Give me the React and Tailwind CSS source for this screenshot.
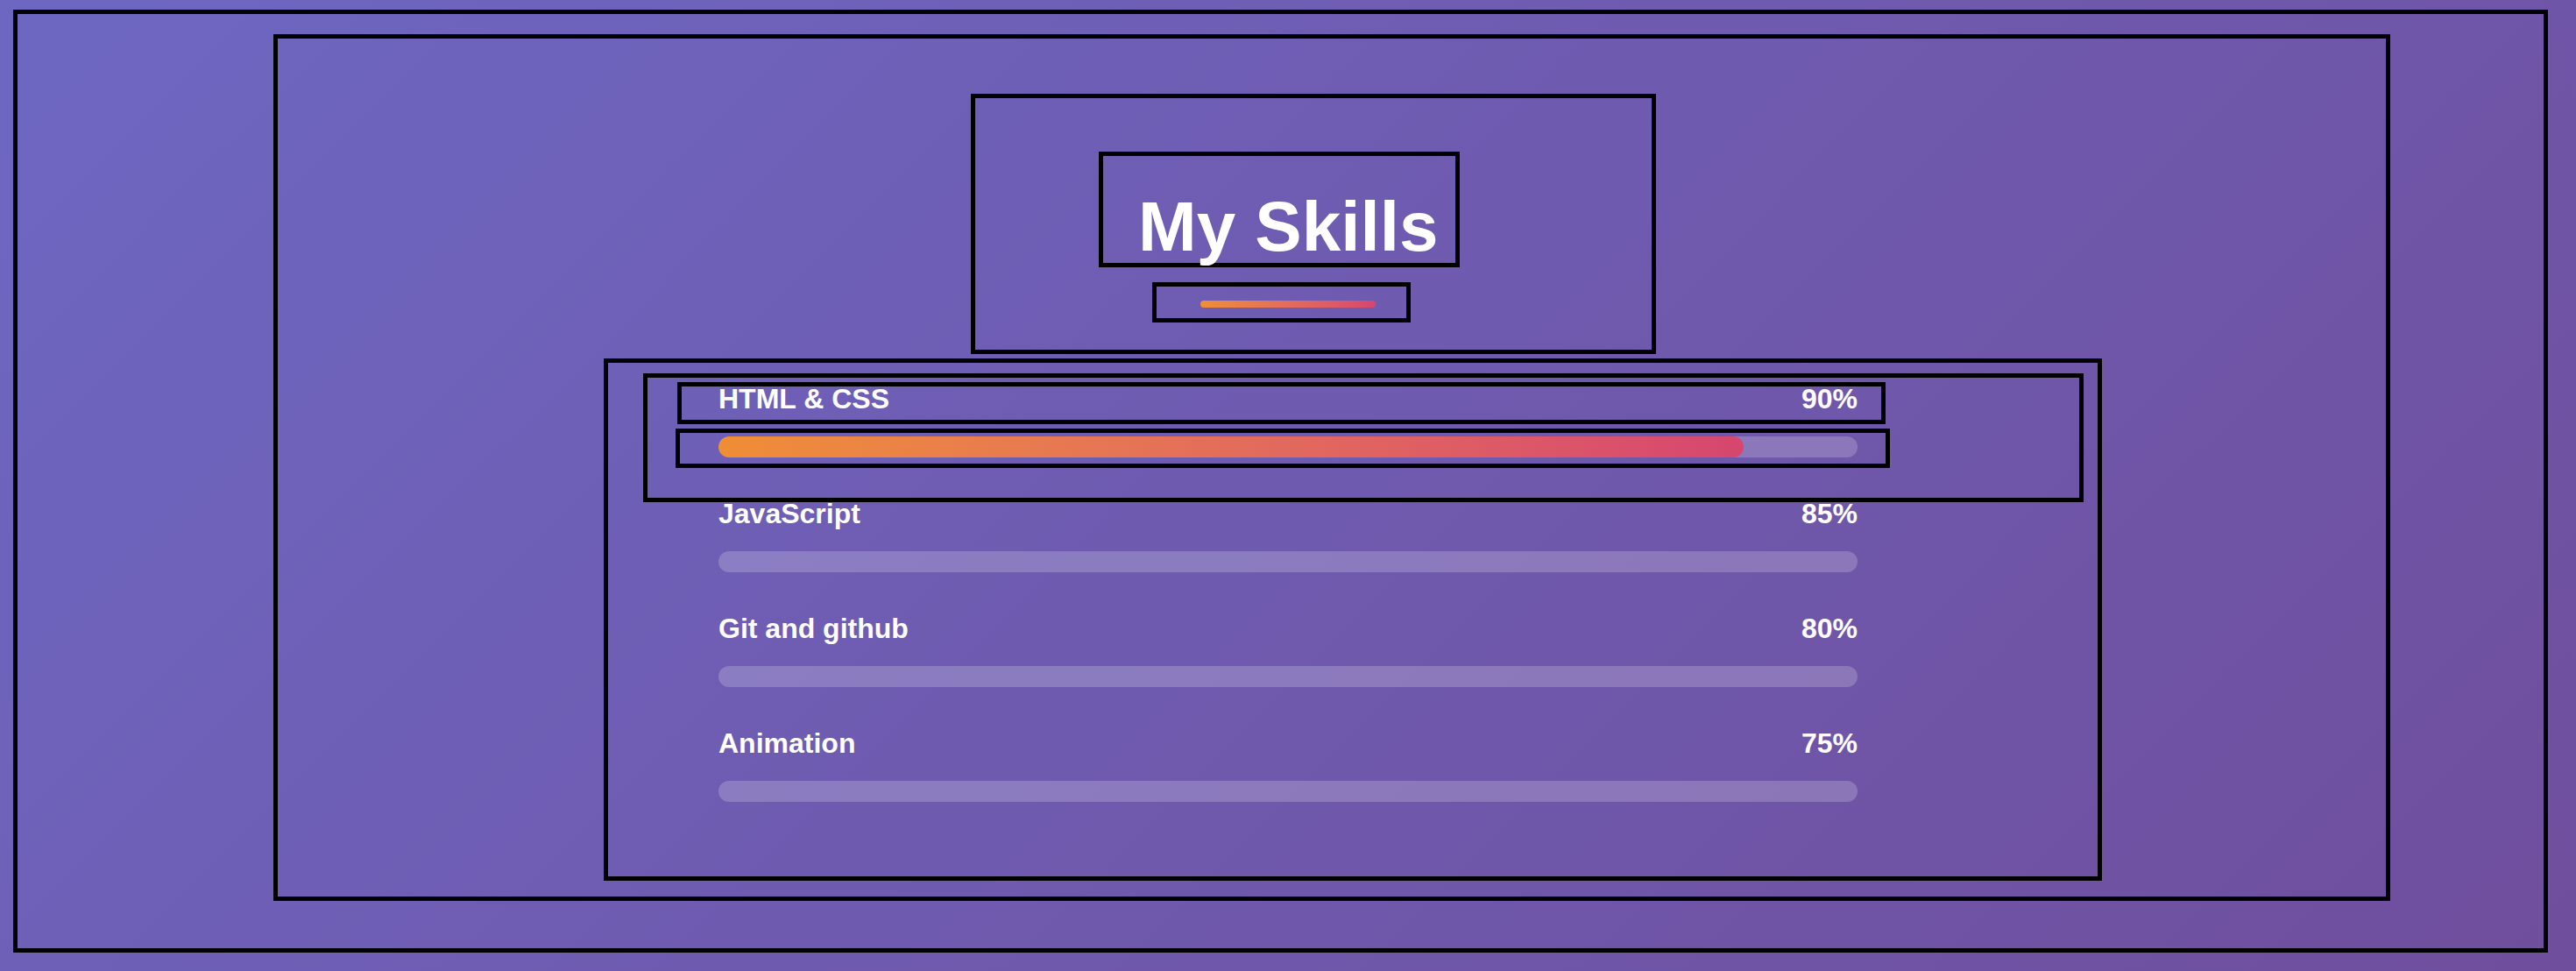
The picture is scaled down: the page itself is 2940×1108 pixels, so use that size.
import React from 'react';

const skills = [
  { name: 'HTML & CSS', level: 90 },
  { name: 'JavaScript', level: 85 },
  { name: 'Git and github', level: 80 },
  { name: 'Animation', level: 75 },
];

function SkillInfo({ skill, className = '' }) {
  return (
    <div className={`flex justify-between text-[32px] font-bold text-white ${className}`}>
      <span>{skill.name}</span>
      <span>{skill.level}%</span>
    </div>
  );
}

function SkillBar({ level, filled, className = '' }) {
  return (
    <div className={`h-6 w-[1300px] rounded-full bg-white/20 overflow-hidden ${className}`}>
      {filled && (
        <div
          className="h-full rounded-full bg-linear-to-r from-[#ef8e35] to-[#d6466f]"
          style={{ width: `${level}%` }}
        />
      )}
    </div>
  );
}

export default function App() {
  const [first, ...rest] = skills;

  return (
    <div
      className="w-full h-[1108px] overflow-hidden pt-[11px] pl-[15px] bg-linear-135 from-[#6d67c2] to-[#6f4e9d]"
      style={{ fontFamily: '"Liberation Sans", Arial, sans-serif' }}
    >
      {/* page */}
      <div className="w-[2893px] h-[1076px] border-[5px] border-black pl-[292px] pt-[23px]">
        {/* container */}
        <section className="w-[2416px] h-[989px] border-[5px] border-black flex flex-col">
          {/* header */}
          <header className="ml-[791px] mt-[63px] w-[782px] h-[297px] border-[5px] border-black flex flex-col">
            <div className="ml-[141px] mt-[61px] w-[412px] h-[132px] border-[5px] border-black">
              <h2 className="pt-[35px] pl-[40px] text-[80px] leading-[92px] font-bold text-white whitespace-nowrap">
                My Skills
              </h2>
            </div>
            <div className="ml-[202px] mt-[17px] w-[295px] h-[46px] border-[5px] border-black">
              <div className="ml-[50px] mt-4 w-[200px] h-2 rounded-full bg-linear-to-r from-[#ef8e35] to-[#d6466f]" />
            </div>
          </header>

          {/* skills list */}
          <div className="ml-[372px] mt-[5px] w-[1710px] h-[596px] border-[5px] border-black flex flex-col">
            <div className="ml-10 mt-3 w-[1644px] h-[147px] border-[5px] border-black flex flex-col">
              <div className="ml-[34px] mt-[5px] w-[1379px] h-12 border-[5px] border-black">
                <SkillInfo skill={first} className="pl-[42px] pr-[27px] leading-[29px]" />
              </div>
              <div className="ml-8 mt-[5px] w-[1386px] h-[45px] border-[5px] border-black">
                <SkillBar level={first.level} filled className="ml-11 mt-1" />
              </div>
            </div>
            <ul className="ml-[126px] w-[1300px] flex flex-col gap-[51px]">
              {rest.map((skill) => (
                <li key={skill.name} className="flex flex-col">
                  <SkillInfo skill={skill} className="leading-[27px]" />
                  <SkillBar level={skill.level} filled={false} className="mt-[29px]" />
                </li>
              ))}
            </ul>
          </div>
        </section>
      </div>
    </div>
  );
}
